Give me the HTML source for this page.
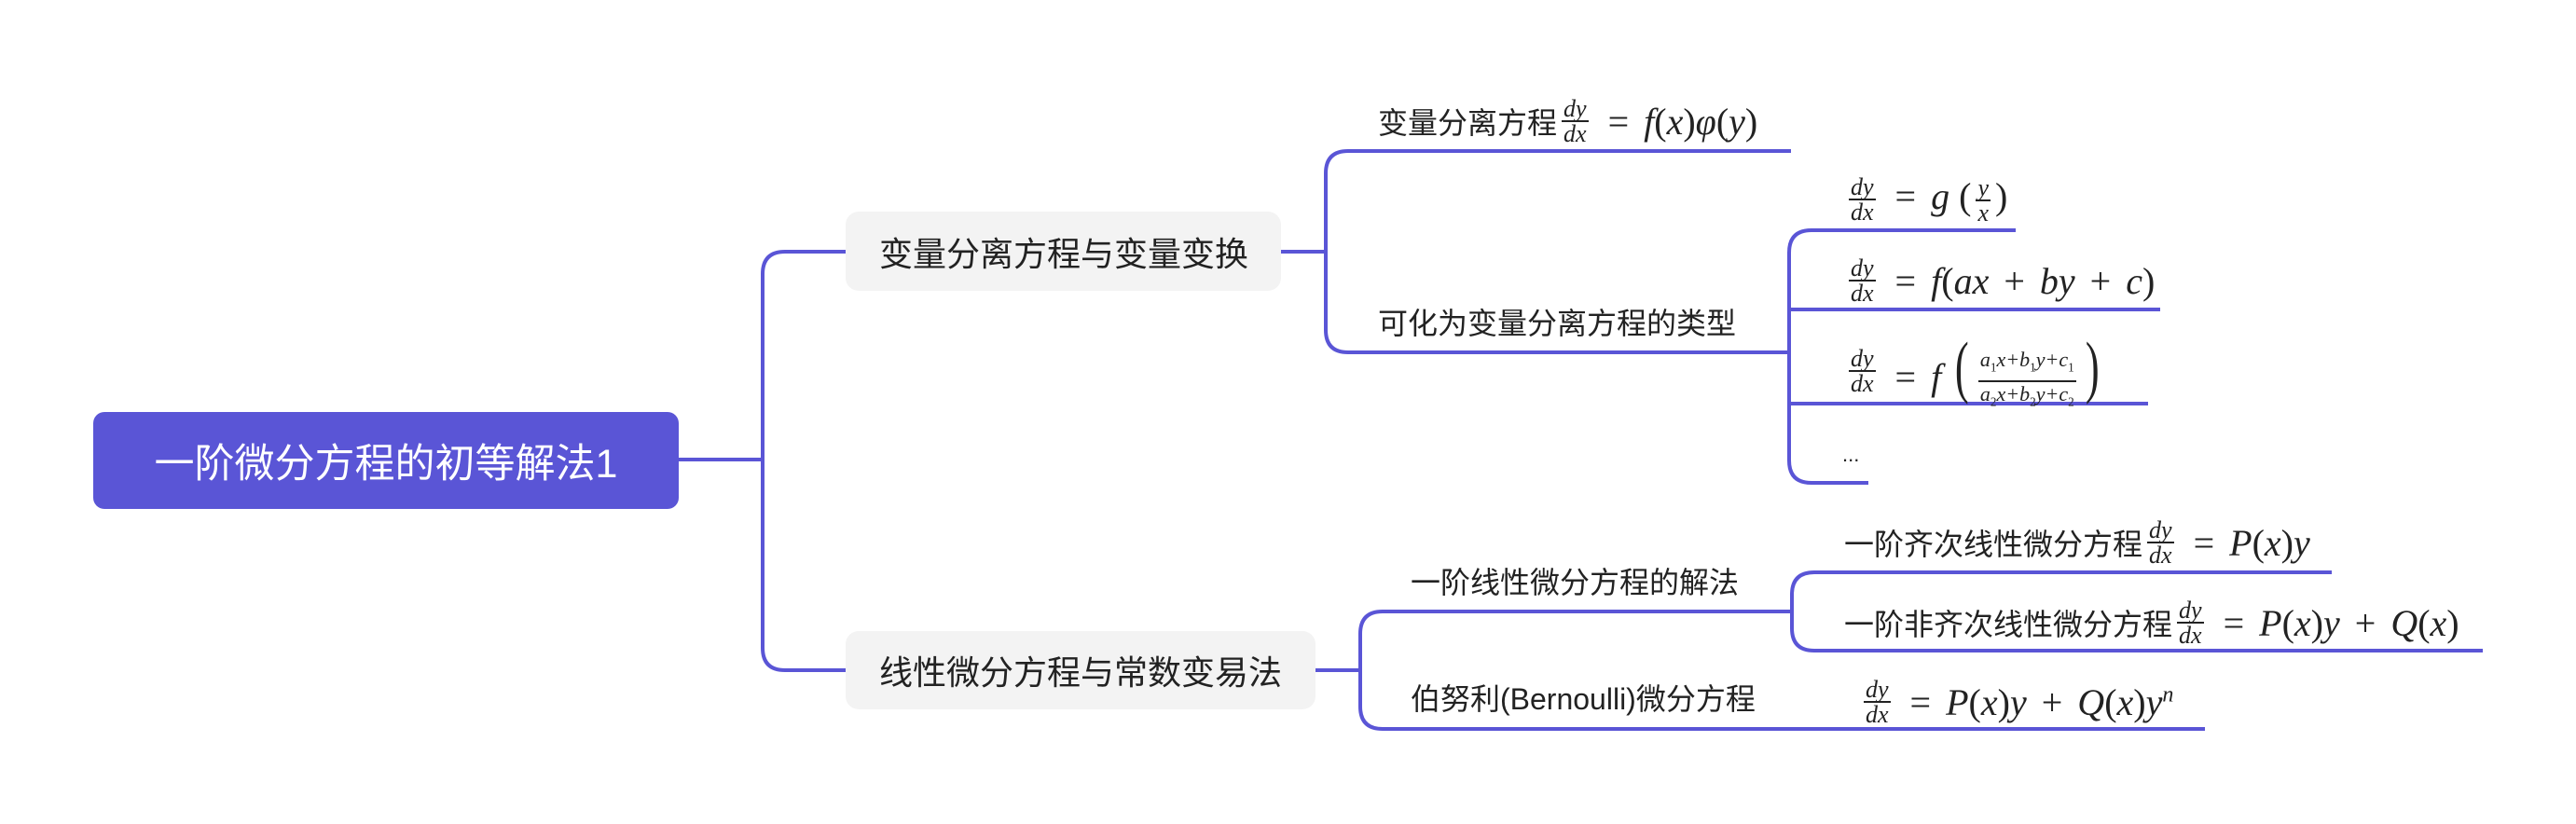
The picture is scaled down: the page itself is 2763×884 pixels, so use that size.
<!DOCTYPE html>
<html><head><meta charset="utf-8"><style>
*{margin:0;padding:0;box-sizing:border-box}
body{width:2763px;height:884px;background:#fff;position:relative;overflow:hidden;font-family:"Liberation Sans","Noto Sans CJK SC",sans-serif;color:#222}
.abs{position:absolute;white-space:nowrap}
.root{left:100px;top:442px;width:628px;height:104px;background:#5a55d6;border-radius:12px;color:#fff;font-size:43px;display:flex;align-items:center;justify-content:center}
.box{background:#f3f3f3;border-radius:14px;font-size:36px;display:flex;align-items:center;padding-left:36px}
.t{font-size:32px;display:flex;align-items:center;height:60px;transform:translateY(-30px)}
.m{font-family:"Liberation Serif","DejaVu Serif",serif;font-style:italic;font-size:40px}
.n{font-style:normal}
.fr{display:inline-flex;flex-direction:column;align-items:center;font-family:"Liberation Serif",serif;font-style:italic;font-size:26px;line-height:25px;margin:0 5px;vertical-align:middle}
.fr .d{border-top:2px solid #222;padding:0 2px}
.sp{margin:0 16px;font-style:normal}
sub,sup{font-size:60%}
.big{font-size:74px;font-style:normal;font-weight:100;transform:scaleX(.6);display:inline-block}
</style></head><body>
<svg class="abs" style="left:0;top:0" width="2763" height="884">
<g fill="none" stroke="#5a55d6" stroke-width="4">
<path d="M728 493H818M907 270H842Q818 270 818 294V695Q818 719 842 719H907"/>
<path d="M1374 270H1422M1921 162H1446Q1422 162 1422 186V354Q1422 378 1446 378H1919"/>
<path d="M2162 247H1943Q1919 247 1919 271V494Q1919 518 1943 518H2004M1919 332H2317M1919 433H2304"/>
<path d="M1411 719H1459M1921 656H1483Q1459 656 1459 680V758Q1459 782 1483 782H2365"/>
<path d="M2501 614H1946Q1922 614 1922 638V674Q1922 698 1946 698H2663"/>
</g></svg>
<div class="abs root">一阶微分方程的初等解法1</div>
<div class="abs box" style="left:907px;top:227px;width:467px;height:85px">变量分离方程与变量变换</div>
<div class="abs box" style="left:907px;top:677px;width:504px;height:84px">线性微分方程与常数变易法</div>

<div class="abs t" style="left:1478px;top:130px">变量分离方程<span class="fr"><span>dy</span><span class="d">dx</span></span><span class="m"><span class="sp">=</span>f<span class="n">(</span>x<span class="n">)</span>φ<span class="n">(</span>y<span class="n">)</span></span></div>
<div class="abs t" style="left:1478px;top:345px">可化为变量分离方程的类型</div>

<div class="abs t" style="left:1978px;top:214px"><span class="fr"><span>dy</span><span class="d">dx</span></span><span class="m"><span class="sp">=</span>g <span class="n">(</span><span class="fr"><span>y</span><span class="d">x</span></span><span class="n">)</span></span></div>
<div class="abs t" style="left:1978px;top:301px"><span class="fr"><span>dy</span><span class="d">dx</span></span><span class="m"><span class="sp">=</span>f<span class="n">(</span>ax<span class="sp">+</span>by<span class="sp">+</span>c<span class="n">)</span></span></div>
<div class="abs t" style="left:1978px;top:398px"><span class="fr"><span>dy</span><span class="d">dx</span></span><span class="m"><span class="sp">=</span>f <span class="big">(</span><span class="fr" style="font-size:22px;line-height:26px"><span>a<sub class="n">1</sub>x+b<sub class="n">1</sub>y+c<sub class="n">1</sub></span><span class="d">a<sub class="n">2</sub>x+b<sub class="n">2</sub>y+c<sub class="n">2</sub></span></span><span class="big">)</span></span></div>
<div class="abs t" style="left:1976px;top:488px;font-size:22px">...</div>

<div class="abs t" style="left:1513px;top:623px">一阶线性微分方程的解法</div>
<div class="abs t" style="left:1513px;top:748px">伯努利(Bernoulli)微分方程</div>

<div class="abs t" style="left:1978px;top:582px">一阶齐次线性微分方程<span class="fr"><span>dy</span><span class="d">dx</span></span><span class="m"><span class="sp">=</span>P<span class="n">(</span>x<span class="n">)</span>y</span></div>
<div class="abs t" style="left:1978px;top:668px">一阶非齐次线性微分方程<span class="fr"><span>dy</span><span class="d">dx</span></span><span class="m"><span class="sp">=</span>P<span class="n">(</span>x<span class="n">)</span>y<span class="sp">+</span>Q<span class="n">(</span>x<span class="n">)</span></span></div>
<div class="abs t" style="left:1994px;top:753px"><span class="fr"><span>dy</span><span class="d">dx</span></span><span class="m"><span class="sp">=</span>P<span class="n">(</span>x<span class="n">)</span>y<span class="sp">+</span>Q<span class="n">(</span>x<span class="n">)</span>y<sup>n</sup></span></div>
</body></html>
